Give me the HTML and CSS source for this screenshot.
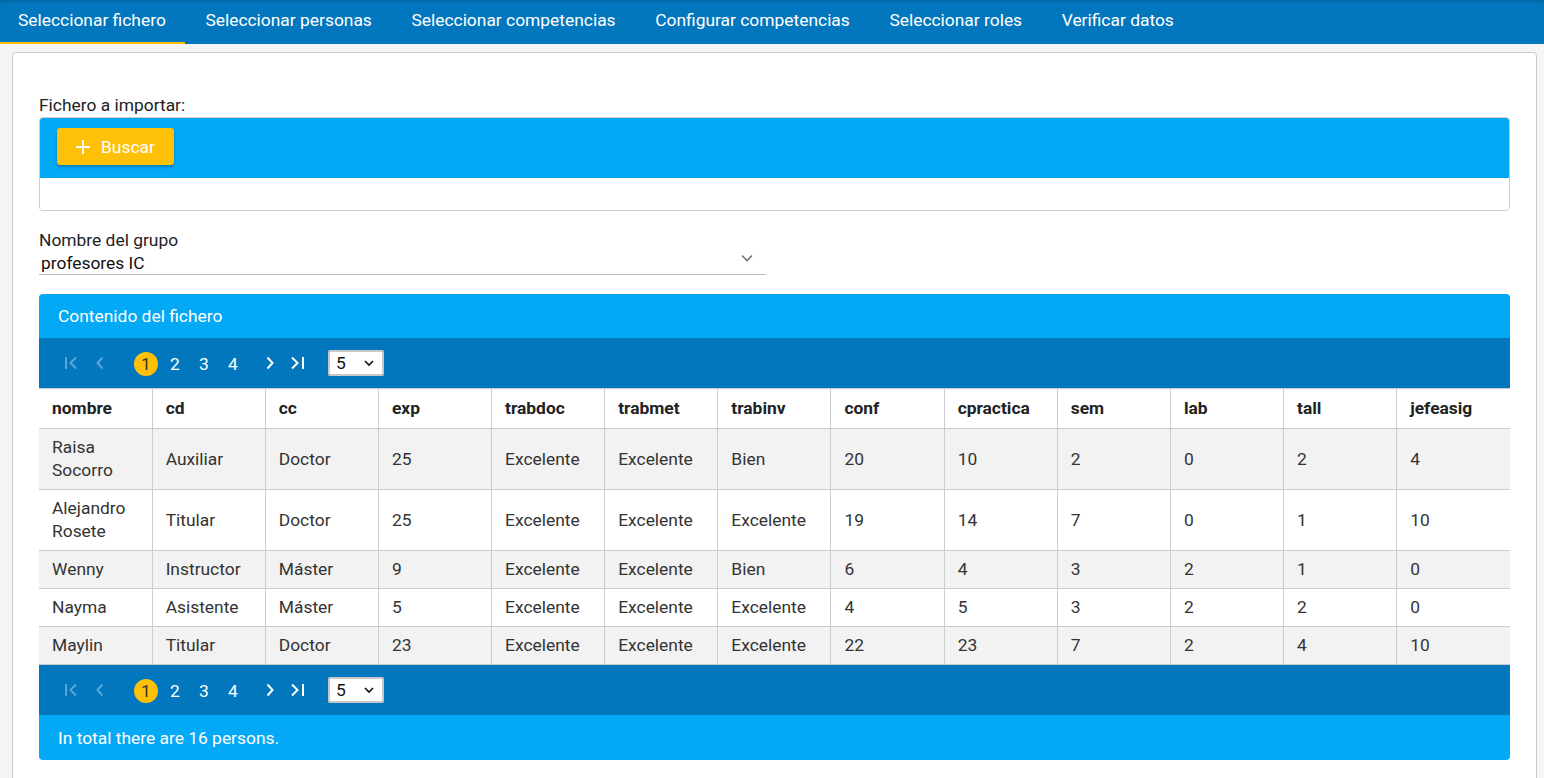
FILE: index.html
```html
<!DOCTYPE html>
<html lang="es">
<head>
<meta charset="utf-8">
<title>Importar fichero</title>
<link rel="stylesheet" href="styles.css">
</head>
<body>
<nav class="tabs">
  <a class="tab active">Seleccionar fichero</a>
  <a class="tab">Seleccionar personas</a>
  <a class="tab">Seleccionar competencias</a>
  <a class="tab">Configurar competencias</a>
  <a class="tab">Seleccionar roles</a>
  <a class="tab">Verificar datos</a>
</nav>
<main class="card">
  <div class="field-label">Fichero a importar:</div>
  <div class="upload">
    <div class="upload-bar">
      <button class="btn-search">
        <svg width="16" height="16" viewBox="0 0 16 16"><path d="M8 1v14M1 8h14" stroke="#fff" stroke-width="2" fill="none"/></svg>
        <span>Buscar</span>
      </button>
    </div>
    <div class="upload-body"></div>
  </div>

  <div class="group">
    <div class="group-label">Nombre del grupo</div>
    <div class="group-select">
      <span>profesores IC</span>
      <svg class="group-chevron" width="12" height="8" viewBox="0 0 12 8"><path d="M1 1.5l5 5 5-5" stroke="#757575" stroke-width="1.6" fill="none"/></svg>
    </div>
  </div>

  <section class="panel">
    <header class="panel-head">Contenido del fichero</header>
    <div class="pager">
      <span class="pg-btn dis"><svg width="16" height="14" viewBox="0 0 16 14"><path d="M2 1v12M12 1.5L6.5 7 12 12.5" stroke="#fff" stroke-width="2" fill="none"/></svg></span>
      <span class="pg-btn dis"><svg width="10" height="14" viewBox="0 0 10 14"><path d="M7.5 1.5L2.5 7l5 5.5" stroke="#fff" stroke-width="2" fill="none"/></svg></span>
      <div class="pages">
        <span class="page cur">1</span><span class="page">2</span><span class="page">3</span><span class="page">4</span>
      </div>
      <span class="pg-btn"><svg width="10" height="14" viewBox="0 0 10 14"><path d="M2.5 1.5l5 5.5-5 5.5" stroke="#fff" stroke-width="2" fill="none"/></svg></span>
      <span class="pg-btn"><svg width="16" height="14" viewBox="0 0 16 14"><path d="M2 1.5L7.5 7 2 12.5M13 1v12" stroke="#fff" stroke-width="2" fill="none"/></svg></span>
      <div class="rpp"><span>5</span><svg width="10" height="7" viewBox="0 0 10 7"><path d="M1 1l4 4 4-4" stroke="#111" stroke-width="1.6" fill="none"/></svg></div>
    </div>
    <table class="data">
      <thead>
        <tr><th>nombre</th><th>cd</th><th>cc</th><th>exp</th><th>trabdoc</th><th>trabmet</th><th>trabinv</th><th>conf</th><th>cpractica</th><th>sem</th><th>lab</th><th>tall</th><th>jefeasig</th></tr>
      </thead>
      <tbody>
        <tr><td>Raisa Socorro</td><td>Auxiliar</td><td>Doctor</td><td>25</td><td>Excelente</td><td>Excelente</td><td>Bien</td><td>20</td><td>10</td><td>2</td><td>0</td><td>2</td><td>4</td></tr>
        <tr><td>Alejandro Rosete</td><td>Titular</td><td>Doctor</td><td>25</td><td>Excelente</td><td>Excelente</td><td>Excelente</td><td>19</td><td>14</td><td>7</td><td>0</td><td>1</td><td>10</td></tr>
        <tr><td>Wenny</td><td>Instructor</td><td>Máster</td><td>9</td><td>Excelente</td><td>Excelente</td><td>Bien</td><td>6</td><td>4</td><td>3</td><td>2</td><td>1</td><td>0</td></tr>
        <tr><td>Nayma</td><td>Asistente</td><td>Máster</td><td>5</td><td>Excelente</td><td>Excelente</td><td>Excelente</td><td>4</td><td>5</td><td>3</td><td>2</td><td>2</td><td>0</td></tr>
        <tr><td>Maylin</td><td>Titular</td><td>Doctor</td><td>23</td><td>Excelente</td><td>Excelente</td><td>Excelente</td><td>22</td><td>23</td><td>7</td><td>2</td><td>4</td><td>10</td></tr>
      </tbody>
    </table>
    <div class="pager">
      <span class="pg-btn dis"><svg width="16" height="14" viewBox="0 0 16 14"><path d="M2 1v12M12 1.5L6.5 7 12 12.5" stroke="#fff" stroke-width="2" fill="none"/></svg></span>
      <span class="pg-btn dis"><svg width="10" height="14" viewBox="0 0 10 14"><path d="M7.5 1.5L2.5 7l5 5.5" stroke="#fff" stroke-width="2" fill="none"/></svg></span>
      <div class="pages">
        <span class="page cur">1</span><span class="page">2</span><span class="page">3</span><span class="page">4</span>
      </div>
      <span class="pg-btn"><svg width="10" height="14" viewBox="0 0 10 14"><path d="M2.5 1.5l5 5.5-5 5.5" stroke="#fff" stroke-width="2" fill="none"/></svg></span>
      <span class="pg-btn"><svg width="16" height="14" viewBox="0 0 16 14"><path d="M2 1.5L7.5 7 2 12.5M13 1v12" stroke="#fff" stroke-width="2" fill="none"/></svg></span>
      <div class="rpp"><span>5</span><svg width="10" height="7" viewBox="0 0 10 7"><path d="M1 1l4 4 4-4" stroke="#111" stroke-width="1.6" fill="none"/></svg></div>
    </div>
    <footer class="panel-foot">In total there are 16 persons.</footer>
  </section>
</main>
</body>
</html>
```

FILE: styles.css
```css
* { box-sizing: border-box; }
html, body { margin: 0; padding: 0; }
body {
  font-family: Roboto, "Noto Sans", sans-serif;
  font-size: 17.4px;
  color: #333;
  background: #f5f5f5;
}
.tabs {
  display: flex;
  height: 44px;
  background: #0277bd;
  box-shadow: inset 0 2px 2px rgba(0,0,0,0.12);
}
.tab {
  display: flex;
  align-items: center;
  padding: 0 19.6px 2px 18px;
  color: #fff;
  white-space: nowrap;
  border-bottom: 2px solid transparent;
}
.tab + .tab { padding-left: 20px; }
.tab.active { border-bottom-color: #ffc107; }

.card {
  margin: 8px 7px 0 12px;
  background: #fff;
  border: 1px solid #ccc;
  border-radius: 4px;
  padding: 41px 26px 40px 26px;
}
.field-label { line-height: 23px; color: #222; }
.upload {
  border: 1px solid #ccc;
  border-radius: 4px;
  overflow: hidden;
}
.upload-bar {
  background: #03a9f4;
  height: 60px;
  padding: 10px 17px;
}
.btn-search {
  display: flex;
  align-items: center;
  gap: 10px;
  height: 37px;
  width: 117px;
  padding: 0 0 0 18px;
  border: none;
  border-radius: 3px;
  background: #ffc107;
  color: #fff;
  font-family: inherit;
  font-size: 17.4px;
  box-shadow: 0 2px 3px rgba(0,0,0,0.25);
}
.upload-body { height: 32px; background: #fff; }

.group { margin-top: 18px; width: 727px; }
.group-label { line-height: 22px; color: #222; }
.group-select {
  display: flex;
  align-items: center;
  justify-content: space-between;
  padding: 1px 13px 0 2px;
  border-bottom: 1px solid #bbb;
  color: #111;
  line-height: 22px;
}
.group-chevron { margin-top: -10px; }

.panel { margin-top: 19px; }
.panel-head {
  background: #03a9f4;
  color: #fff;
  height: 44px;
  padding: 0 19px;
  display: flex;
  align-items: center;
  border-radius: 4px 4px 0 0;
}
.panel-foot {
  background: #03a9f4;
  color: #fff;
  height: 45px;
  padding: 0 19px;
  display: flex;
  align-items: center;
  border-radius: 0 0 4px 4px;
}
.pager {
  background: #0277bd;
  height: 50px;
  display: flex;
  align-items: center;
  padding-left: 19px;
  color: #fff;
}
.pg-btn {
  width: 28px;
  height: 28px;
  display: flex;
  align-items: center;
  justify-content: center;
}
.pg-btn.dis { opacity: 0.35; }
.pages { display: flex; gap: 5px; margin: 0 11px 0 20px; }
.page {
  width: 24px;
  height: 24px;
  border-radius: 50%;
  display: flex;
  align-items: center;
  justify-content: center;
  margin-top: 2px;
}
.page.cur { background: #ffc107; color: #333; }
.rpp {
  margin-left: 16px;
  width: 56px;
  height: 26px;
  background: #fff;
  border: 2px solid #c8c8c8;
  border-radius: 2px;
  display: flex;
  align-items: center;
  justify-content: space-between;
  padding: 0 8px 0 6px;
  color: #111;
}
.data {
  width: 100%;
  border-collapse: collapse;
  table-layout: fixed;
}
.data th, .data td {
  border: 1px solid #ccc;
  padding: 7px 13px;
  text-align: left;
  line-height: 23px;
  color: #333;
}
.data th { font-weight: bold; padding: 8px 13px; color: #222; background: #fff; }
.data tbody tr:nth-child(odd) td { background: #f2f2f2; }
.data tbody tr:nth-child(even) td { background: #fff; }
.data tr > :first-child { border-left: none; }
.data tr > :last-child { border-right: none; }
```
